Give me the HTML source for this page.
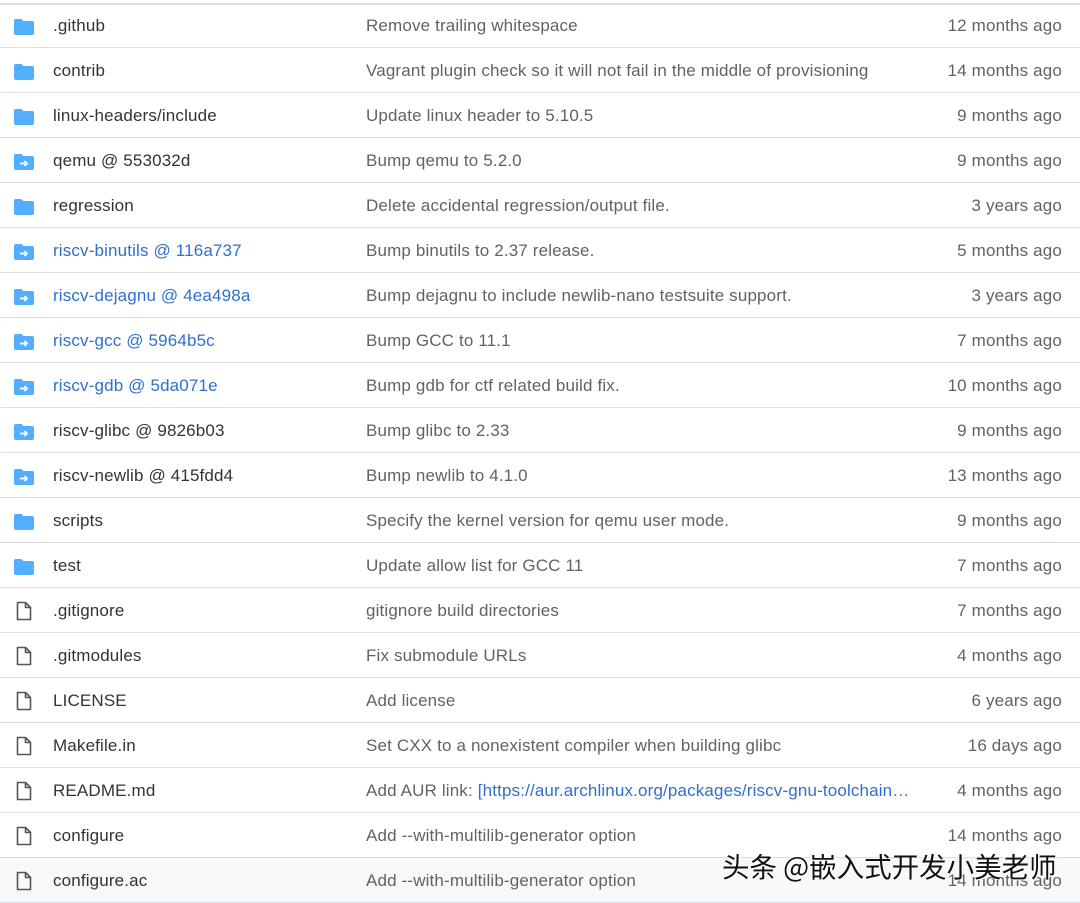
<!DOCTYPE html>
<html><head><meta charset="utf-8"><style>
body{margin:0;width:1080px;height:903px;overflow:hidden;background:#fff;font-family:"Liberation Sans","Noto Sans CJK SC",sans-serif;font-size:17px;letter-spacing:0.15px;color:#333}
.top{position:absolute;left:0;top:0;width:1080px;height:3px;border-bottom:2px solid #d8dee4;background:#fff}
.r{position:absolute;left:0;width:1080px;height:44px;border-bottom:1px solid #d8dee4}
.r span{position:absolute;top:1px;line-height:44px;white-space:nowrap}
.n{left:53px}.m{left:366px;color:#5f6368}.t{right:18px;color:#5f6368}
.b{color:#2f6fd0}
.ic{position:absolute;left:14px;top:14px}
.wm{position:absolute;left:722px;top:845px;font-size:27.5px;color:#111;font-family:"Noto Sans CJK SC",sans-serif;text-shadow:1px 1px 0 #fff,-1px -1px 0 #fff;letter-spacing:0px}
</style></head><body>
<div class="top"></div>
<svg width="0" height="0" style="position:absolute"><defs>
<symbol id="f" viewBox="0 0 20 16"><path d="M0 2Q0 0 2 0H7.5l2 2H18Q20 2 20 4v10Q20 16 18 16H2Q0 16 0 14z" fill="#54aeff"/></symbol>
<symbol id="s" viewBox="0 0 20 16"><path d="M0 2Q0 0 2 0H7.5l2 2H18Q20 2 20 4v10Q20 16 18 16H2Q0 16 0 14z" fill="#54aeff"/><path d="M6 9.5h7M10.5 7 13 9.5l-2.5 2.5" stroke="#fff" stroke-width="1.8" fill="none"/></symbol>
<symbol id="d" viewBox="0 0 20 20"><path d="M3.5 1.5h8l5 5v12h-13z M11.5 1.5v5h5" fill="none" stroke="#555" stroke-width="1.6" stroke-linejoin="round"/></symbol>
</defs></svg>
<div id="rows"></div>
<script>
var d=[["f",".github","Remove trailing whitespace","12 months ago"],
["f","contrib","Vagrant plugin check so it will not fail in the middle of provisioning","14 months ago"],
["f","linux-headers/include","Update linux header to 5.10.5","9 months ago"],
["s","qemu @ 553032d","Bump qemu to 5.2.0","9 months ago"],
["f","regression","Delete accidental regression/output file.","3 years ago"],
["sb","riscv-binutils @ 116a737","Bump binutils to 2.37 release.","5 months ago"],
["sb","riscv-dejagnu @ 4ea498a","Bump dejagnu to include newlib-nano testsuite support.","3 years ago"],
["sb","riscv-gcc @ 5964b5c","Bump GCC to 11.1","7 months ago"],
["sb","riscv-gdb @ 5da071e","Bump gdb for ctf related build fix.","10 months ago"],
["s","riscv-glibc @ 9826b03","Bump glibc to 2.33","9 months ago"],
["s","riscv-newlib @ 415fdd4","Bump newlib to 4.1.0","13 months ago"],
["f","scripts","Specify the kernel version for qemu user mode.","9 months ago"],
["f","test","Update allow list for GCC 11","7 months ago"],
["d",".gitignore","gitignore build directories","7 months ago"],
["d",".gitmodules","Fix submodule URLs","4 months ago"],
["d","LICENSE","Add license","6 years ago"],
["d","Makefile.in","Set CXX to a nonexistent compiler when building glibc","16 days ago"],
["d","README.md",'Add AUR link: <span class="b" style="position:static">[https://aur.archlinux.org/packages/riscv-gnu-toolchain…</span>',"4 months ago"],
["d","configure","Add --with-multilib-generator option","14 months ago"],
["d","configure.ac","Add --with-multilib-generator option","14 months ago"]];
var h="";
d.forEach(function(r,i){var ic=r[0].replace("b","");
h+='<div class="r" style="top:'+(3+45*i)+'px'+(i==19?';background:#f6f8fa':'')+'"><svg class="ic" width="20" height="'+(ic=="d"?20:16)+'"'+(ic=="d"?' style="top:13px"':' style="top:16px"')+'><use href="#'+ic+'"/></svg><span class="n'+(r[0]=="sb"?' b':'')+'">'+r[1]+'</span><span class="m">'+r[2]+'</span><span class="t">'+r[3]+'</span></div>';});
document.getElementById("rows").innerHTML=h;
</script>
<div class="wm">头条 @嵌入式开发小美老师</div>
</body></html>
